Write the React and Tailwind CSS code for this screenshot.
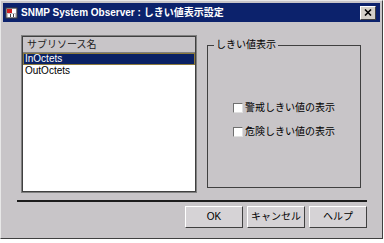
import React from 'react';

const font = { fontFamily: '"Liberation Sans", "Noto Sans CJK JP", sans-serif' };

const TitleIcon = () => (
  <svg width="13" height="13" viewBox="0 0 13 13" className="shrink-0">
    <rect x="1" y="2" width="11" height="10" fill="#c8c4c8" stroke="#404040" strokeWidth="1" />
    <rect x="2" y="3" width="5" height="4" fill="#d02020" />
    <rect x="7" y="3" width="4" height="4" fill="#ffffff" />
    <rect x="3" y="8" width="7" height="3" fill="#ffffff" />
    <rect x="5" y="8" width="1" height="3" fill="#404040" />
    <rect x="8" y="8" width="1" height="3" fill="#404040" />
  </svg>
);

const CloseButton = () => (
  <div className="w-[16px] h-[14px] bg-[#d4d0c8] border border-t-white border-l-white border-r-[#404040] border-b-[#404040] flex items-center justify-center">
    <svg width="8" height="7" viewBox="0 0 8 7">
      <path d="M1 0.5 L7 6.5 M7 0.5 L1 6.5" stroke="#000" strokeWidth="1.6" />
    </svg>
  </div>
);

const Checkbox = ({ label }) => (
  <div className="flex items-center gap-[2px] h-[12px]">
    <div className="w-[10px] h-[10px] bg-white border border-t-[#707070] border-l-[#707070] border-r-[#e0e0e0] border-b-[#e0e0e0]" />
    <span className="text-[10px] leading-[12px] text-black">{label}</span>
  </div>
);

const Button = ({ children }) => (
  <button className="w-[58px] h-[22px] bg-[#d6d3d6] border border-t-white border-l-white border-r-[#404040] border-b-[#404040] text-[10px] leading-none text-black flex items-center justify-center">
    {children}
  </button>
);

export default function App() {
  const items = ['InOctets', 'OutOctets'];

  return (
    <div className="w-[384px] h-[243px] bg-white" style={font}>
      {/* Window */}
      <div className="w-[383px] h-[239px] bg-[#c8c5c8] border border-t-[#e8e8e8] border-l-[#e8e8e8] border-r-[#404040] border-b-[#404040] p-[2px] flex flex-col">
        {/* Title bar */}
        <div className="h-[19px] bg-[#0c226c] flex items-center pl-[2px] pr-[4px] gap-[3px]">
          <TitleIcon />
          <span className="text-white font-bold text-[10px] leading-none whitespace-nowrap flex-1">
            SNMP System Observer : しきい値表示設定
          </span>
          <CloseButton />
        </div>

        {/* Body */}
        <div className="flex mt-[13px] pl-[18px] gap-[10px]">
          {/* List box */}
          <div className="w-[176px] h-[158px] border border-[#808080] bg-white">
            <div className="h-full border border-[#404040] flex flex-col">
              <div className="h-[16px] bg-[#c8c5c8] border-b border-[#808080] flex items-center pl-[4px] text-[10px] text-[#202020]">
                サブリソース名
              </div>
              {items.map((it, i) => (
                <div
                  key={it}
                  className={
                    i === 0
                      ? 'h-[12px] bg-[#0a2164] text-white border border-[#8c7a3c] flex items-center pl-[1px] text-[10px] leading-none'
                      : 'h-[12px] text-black flex items-center pl-[2px] text-[10px] leading-none'
                  }
                >
                  {it}
                </div>
              ))}
            </div>
          </div>

          {/* Group box */}
          <div className="relative mt-[10px] w-[154px] h-[143px] border border-[#404040]">
            <span className="absolute -top-[7px] left-[6px] px-[2px] bg-[#c8c5c8] text-[10px] leading-[12px] text-black">
              しきい値表示
            </span>
            <div className="flex flex-col pl-[25px] pt-[56px] gap-[12px]">
              <Checkbox label="警戒しきい値の表示" />
              <Checkbox label="危険しきい値の表示" />
            </div>
          </div>
        </div>

        {/* Separator */}
        <div className="mt-[7px] ml-[14px] w-[350px] h-[2px] bg-[#1c1c1c]" />

        {/* Buttons */}
        <div className="flex justify-end gap-[4px] mt-[4px] pr-[13px]">
          <Button>OK</Button>
          <Button>キャンセル</Button>
          <Button>ヘルプ</Button>
        </div>
      </div>
    </div>
  );
}
